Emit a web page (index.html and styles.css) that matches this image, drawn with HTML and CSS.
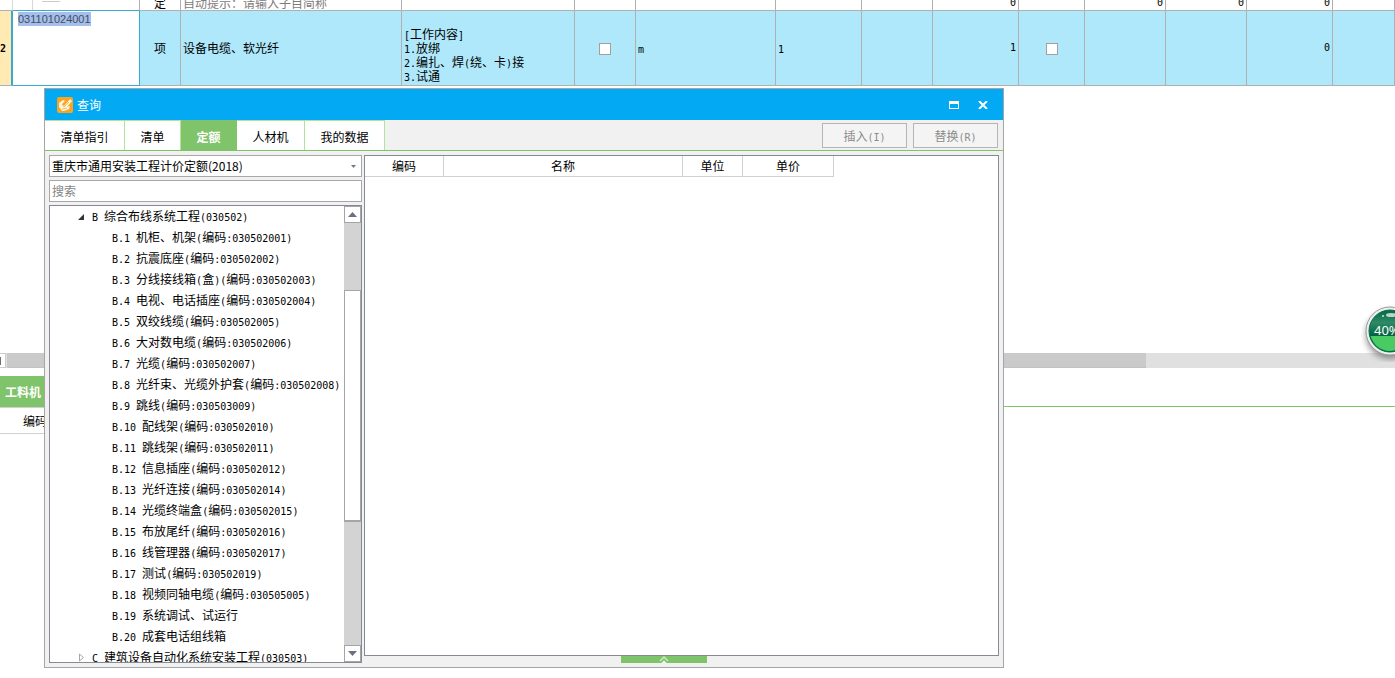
FILE: index.html
```html
<!DOCTYPE html>
<html lang="zh-CN">
<head>
<meta charset="utf-8">
<title>查询</title>
<link rel="stylesheet" href="styles.css">
</head>
<body>
<main class="workspace">
  <section class="sheet-area">
    <div class="sheet-view">
      <table class="sheet">
        <colgroup>
          <col class="w13"><col class="w127"><col class="w41"><col class="w221"><col class="w173"><col class="w61"><col class="w140"><col class="w86"><col class="w71"><col class="w86"><col class="w66"><col class="w81"><col class="w81"><col class="w86"><col>
        </colgroup>
        <tbody>
          <tr class="row-plain">
            <td class="pale"></td><td class="expander"><i></i></td><td class="center">定</td><td class="hint">自动提示：请输入子目简称</td><td></td><td></td><td></td><td></td><td></td><td class="num">0</td><td></td><td class="num">0</td><td class="num">0</td><td class="num">0</td><td></td>
          </tr>
          <tr class="row-active">
            <th class="row-no">2</th>
            <td class="editing"><input class="code-input" type="text" value="031101024001" aria-label="编码"></td>
            <td class="center">项</td>
            <td>设备电缆、软光纤</td>
            <td class="detail"><span class="n">[</span>工作内容<span class="n">]</span><br><span class="n">1.</span>放绑<br><span class="n">2.</span>编扎、焊<span class="n">(</span>绕、卡<span class="n">)</span>接<br><span class="n">3.</span>试通</td>
            <td class="center"><input class="tick" type="checkbox" aria-label="汇总"></td>
            <td><span class="n">m</span></td>
            <td><span class="n">1</span></td>
            <td></td>
            <td class="num">1</td>
            <td class="center"><input class="tick" type="checkbox" aria-label="锁定"></td>
            <td></td><td></td>
            <td class="num">0</td>
            <td></td>
          </tr>
        </tbody>
      </table>
    </div>
  </section>
  <div class="hscroll"><span class="hscroll-button"><i></i></span><span class="hscroll-thumb"></span></div>
  <div class="lower-tabs"><button class="lower-tab" type="button">工料机</button></div>
  <div class="lower-head">编码</div>
</main>

<section class="dialog" role="dialog" aria-labelledby="dialog-title">
  <header class="titlebar">
    <svg class="app-icon" width="16" height="16" viewBox="0 0 16 16">
      <rect width="16" height="16" rx="2" fill="#fba51f"/>
      <path d="M2 6l4-3 2 1-3 3 2 2 6-7 2 2-5 6 3-1-1 3-5 2H5L2 10z" fill="#fff6e2"/>
      <path d="M5 7l2 3 5-5M5 12l5-1" fill="none" stroke="#f5bb5c"/>
    </svg>
    <h1 id="dialog-title" class="title">查询</h1>
    <button class="window-button" type="button" aria-label="最大化"><svg width="10" height="8" viewBox="0 0 10 8"><path d="M0 0h10v8H0zM1 3v4h8V3z" fill="#fff" fill-rule="evenodd"/></svg></button>
    <button class="window-button" type="button" aria-label="关闭"><svg width="10" height="8" viewBox="0 0 10 8"><path d="M1 0l8 8M9 0L1 8" stroke="#fff" stroke-width="2"/></svg></button>
  </header>
  <nav class="tabs">
    <button class="tab tab-guide" type="button">清单指引</button>
    <button class="tab tab-short" type="button">清单</button>
    <button class="tab tab-short active" type="button">定额</button>
    <button class="tab tab-mid" type="button">人材机</button>
    <button class="tab tab-guide" type="button">我的数据</button>
    <div class="actions">
      <button class="action" type="button" disabled>插入<span class="n">(I)</span></button>
      <button class="action" type="button" disabled>替换<span class="n">(R)</span></button>
    </div>
  </nav>
  <div class="dialog-body">
    <div class="side">
      <div class="combo">
        <select class="combo-select" aria-label="定额库"><option>重庆市通用安装工程计价定额(2018)</option></select>
        <svg class="combo-arrow" width="5" height="3" viewBox="0 0 5 3"><path d="M0 0h5L2.500 3z" fill="#737a86"/></svg>
      </div>
      <input class="search" type="text" placeholder="搜索" aria-label="搜索">
      <div class="tree">
        <div class="tree-view">
          <div class="branch"><svg class="twist" width="7" height="7" viewBox="0 0 7 7"><path d="M6 0v6H0z" fill="#333"/></svg><span class="n">B </span>综合布线系统工程<span class="n">(030502)</span></div>
          <ul class="leaves">
            <li><span class="n">B.1 </span>机柜、机架<span class="n">(</span>编码<span class="n">:030502001)</span></li>
            <li><span class="n">B.2 </span>抗震底座<span class="n">(</span>编码<span class="n">:030502002)</span></li>
            <li><span class="n">B.3 </span>分线接线箱<span class="n">(</span>盒<span class="n">)(</span>编码<span class="n">:030502003)</span></li>
            <li><span class="n">B.4 </span>电视、电话插座<span class="n">(</span>编码<span class="n">:030502004)</span></li>
            <li><span class="n">B.5 </span>双绞线缆<span class="n">(</span>编码<span class="n">:030502005)</span></li>
            <li><span class="n">B.6 </span>大对数电缆<span class="n">(</span>编码<span class="n">:030502006)</span></li>
            <li><span class="n">B.7 </span>光缆<span class="n">(</span>编码<span class="n">:030502007)</span></li>
            <li><span class="n">B.8 </span>光纤束、光缆外护套<span class="n">(</span>编码<span class="n">:030502008)</span></li>
            <li><span class="n">B.9 </span>跳线<span class="n">(</span>编码<span class="n">:030503009)</span></li>
            <li><span class="n">B.10 </span>配线架<span class="n">(</span>编码<span class="n">:030502010)</span></li>
            <li><span class="n">B.11 </span>跳线架<span class="n">(</span>编码<span class="n">:030502011)</span></li>
            <li><span class="n">B.12 </span>信息插座<span class="n">(</span>编码<span class="n">:030502012)</span></li>
            <li><span class="n">B.13 </span>光纤连接<span class="n">(</span>编码<span class="n">:030502014)</span></li>
            <li><span class="n">B.14 </span>光缆终端盒<span class="n">(</span>编码<span class="n">:030502015)</span></li>
            <li><span class="n">B.15 </span>布放尾纤<span class="n">(</span>编码<span class="n">:030502016)</span></li>
            <li><span class="n">B.16 </span>线管理器<span class="n">(</span>编码<span class="n">:030502017)</span></li>
            <li><span class="n">B.17 </span>测试<span class="n">(</span>编码<span class="n">:030502019)</span></li>
            <li><span class="n">B.18 </span>视频同轴电缆<span class="n">(</span>编码<span class="n">:030505005)</span></li>
            <li><span class="n">B.19 </span>系统调试、试运行</li>
            <li><span class="n">B.20 </span>成套电话组线箱</li>
          </ul>
          <div class="branch"><svg class="twist" width="7" height="9" viewBox="0 0 7 9"><path d="M1.500 1v7l4-3.500z" fill="#fff" stroke="#a6a6a6"/></svg><span class="n">C </span>建筑设备自动化系统安装工程<span class="n">(030503)</span></div>
        </div>
        <div class="vscroll">
          <button class="vscroll-button" type="button" aria-label="向上"><svg width="9" height="5" viewBox="0 0 9 5"><path d="M0 5h9L4.500 0z" fill="#6b7080"/></svg></button>
          <div class="vscroll-track"><div class="vscroll-thumb"></div></div>
          <button class="vscroll-button" type="button" aria-label="向下"><svg width="9" height="5" viewBox="0 0 9 5"><path d="M0 0h9L4.500 5z" fill="#6b7080"/></svg></button>
        </div>
      </div>
    </div>
    <div class="content">
      <div class="results">
        <table class="result-table">
          <thead><tr><th class="w79">编码</th><th class="w239">名称</th><th class="w60">单位</th><th class="w91">单价</th></tr></thead>
        </table>
      </div>
      <button class="handle" type="button" aria-label="展开"><svg width="10" height="7" viewBox="0 0 10 7"><path d="M1 5l4-4 4 4" fill="none" stroke="#c9e8bf" stroke-width="1.500"/><path d="M2.500 7L5 4.500 7.500 7z" fill="#fff"/></svg></button>
    </div>
  </div>
</section>

<svg class="meter" width="60" height="60" viewBox="0 0 60 60">
  <defs>
    <linearGradient id="dark" x1="0" y1="0" x2="0" y2="1"><stop offset="0" stop-color="#006a44"/><stop offset="0.300" stop-color="#2f8a68"/><stop offset="0.600" stop-color="#006442"/></linearGradient>
    <clipPath id="level"><rect y="34" width="60" height="26"/></clipPath>
    <filter id="shade" x="-20%" y="-20%" width="140%" height="150%"><feGaussianBlur stdDeviation="3"/></filter>
  </defs>
  <circle cx="29" cy="33" r="24" fill="#666" opacity="0.700" filter="url(#shade)"/>
  <circle cx="29" cy="29" r="24" fill="#f0f0f0" stroke="#9a9a9a"/>
  <circle cx="29" cy="29" r="21" fill="url(#dark)" stroke="#00714b"/>
  <circle cx="29" cy="29" r="20" fill="#48cb62" clip-path="url(#level)"/>
  <ellipse cx="30" cy="13" rx="5" ry="2" fill="#fff" opacity="0.700"/>
  <circle cx="22" cy="14" r="1" fill="#fff" opacity="0.800"/>
  <text x="13" y="33" class="meter-text">40%</text>
</svg>
</body>
</html>
```
FILE: styles.css
```css
* { box-sizing: border-box; }
body {
  margin: 0;
  height: 100vh;
  position: relative;
  overflow: hidden;
  background: #fff;
  color: #000;
  font: 12px/14px "Noto Sans CJK SC", sans-serif;
}
button, input, select {
  margin: 0;
  padding: 0;
  border: 0;
  border-radius: 0;
  background: none;
  color: inherit;
  font: inherit;
}
.n {
  font-family: "DejaVu Sans Mono", monospace;
  font-size: 10px;
  line-height: 1;
  white-space: pre;
}

/* worksheet */
.sheet-area { height: 353px; }
.sheet-view {
  height: 86px;
  display: flex;
  align-items: flex-end;
  overflow: hidden;
}
.sheet {
  width: 100%;
  flex: none;
  table-layout: fixed;
  border-collapse: separate;
  border-spacing: 0;
}
.w13 { width: 13px; }
.w41 { width: 41px; }
.w60 { width: 60px; }
.w61 { width: 61px; }
.w66 { width: 66px; }
.w71 { width: 71px; }
.w79 { width: 79px; }
.w81 { width: 81px; }
.w86 { width: 86px; }
.w91 { width: 91px; }
.w127 { width: 127px; }
.w140 { width: 140px; }
.w173 { width: 173px; }
.w221 { width: 221px; }
.w239 { width: 239px; }
.sheet td, .sheet th {
  padding: 0 2px;
  border-right: 1px solid #b0b0b0;
  border-bottom: 1px solid #b0b0b0;
  white-space: nowrap;
}
.row-plain td { height: 16px; }
.row-plain .pale { border-right-color: #d8d8d8; }
.sheet .hint { color: #7b7b7b; overflow: hidden; }
.sheet .expander { padding: 0 0 0 19px; border-bottom-color: #39a9d2; vertical-align: top; }
.expander i {
  display: block;
  width: 28px;
  height: 15px;
  border-left: 1px solid #d8d8d8;
}
.expander i::after {
  content: "";
  display: block;
  width: 18px;
  height: 6px;
  margin-left: 9px;
  border-bottom: 1px solid #ccc;
}
.sheet .center { padding: 0; text-align: center; }
.sheet .num {
  text-align: right;
  font: 10px/14px "DejaVu Sans Mono", monospace;
}
.row-plain .num { vertical-align: bottom; }
.row-active td { height: 75px; background: #aee8fa; }
.sheet .row-no {
  padding: 0;
  background: #ffeab3;
  border-right: 2px solid #39a9d2;
  font: bold 10px "DejaVu Sans Mono", monospace;
  text-align: left;
}
.sheet .editing {
  padding: 1px 5px;
  background: #fff;
  border-color: #39a9d2;
  vertical-align: top;
}
.code-input {
  display: block;
  width: 73px;
  height: 14px;
  background: #a4bfec;
  color: #464d5e;
  font: 11px "Liberation Sans", sans-serif;
}
.sheet .detail { padding-top: 14px; }
.tick {
  appearance: none;
  width: 12px;
  height: 12px;
  border: 1px solid #a0a0a0;
  background: #fff;
  vertical-align: middle;
}

/* lower pane */
.hscroll { height: 15px; display: flex; background: #e0e0e0; }
.hscroll-button {
  width: 6px;
  display: flex;
  align-items: center;
  justify-content: flex-start;
  border: solid #ccc;
  border-width: 1px 1px 1px 0;
  background: #fff;
}
.hscroll-button i { width: 1px; height: 8px; background: #6b7080; }
.hscroll-thumb {
  flex: 0 0 1139px;
  margin-left: 1px;
  border-bottom: 1px solid #c2c2c2;
  background: #cacaca;
}
.lower-tabs {
  margin-top: 8px;
  height: 31px;
  display: flex;
  border-bottom: 1px solid #7fc36a;
}
.lower-tab {
  width: 80px;
  padding: 2px 5px 0;
  background: #7fc36a;
  color: #fff;
  font-weight: bold;
  text-align: left;
}
.lower-head {
  width: 100px;
  height: 27px;
  padding-left: 23px;
  border: solid #d0d0d0;
  border-width: 1px 0;
  line-height: 25px;
}

/* dialog */
.dialog {
  position: absolute;
  inset: 88px 391px 10px 44px;
  display: flex;
  flex-direction: column;
  border: 1px solid #a5a5a5;
  background: #f1f1f1;
}
.titlebar {
  height: 31px;
  padding: 0 10px 0 12px;
  display: flex;
  align-items: center;
  background: #03a9f2;
  color: #fff;
}
.app-icon { margin-right: 4px; }
.title { margin: 0; flex: 1; font-size: 12px; font-weight: normal; }
.window-button {
  width: 20px;
  height: 20px;
  margin-left: 9px;
  display: flex;
  align-items: center;
  justify-content: center;
}
.tabs {
  height: 31px;
  display: flex;
  border-bottom: 1px solid #7fc36a;
}
.tab {
  padding-top: 3px;
  border: solid #b2e39e;
  border-width: 1px 1px 0 0;
  background: #fff;
}
.tab-guide { width: 80px; }
.tab-short { width: 56px; }
.tab-mid { width: 68px; }
.tab.active {
  border-color: #7fc36a;
  background: #7fc36a;
  color: #fff;
  font-weight: bold;
}
.actions {
  margin-left: auto;
  padding: 3px 5px;
  display: flex;
  gap: 6px;
  align-items: flex-start;
}
.action {
  width: 85px;
  height: 25px;
  border: 1px solid #b5b5b5;
  background: #f4f4f4;
  color: #8c8c8c;
}
.dialog-body {
  flex: 1;
  min-height: 0;
  padding: 4px;
  display: flex;
  gap: 2px;
}
.side {
  width: 313px;
  display: flex;
  flex-direction: column;
  gap: 3px;
}
.combo {
  height: 22px;
  padding-right: 5px;
  display: flex;
  align-items: center;
  border: 1px solid #a8a8a8;
  background: #fff;
}
.combo-select { appearance: none; flex: 1; padding-left: 2px; outline: 0; }
.search {
  height: 22px;
  padding: 0 2px 2px;
  border: 1px solid #a8a8a8;
  background: #fff;
}
.search::placeholder { color: #858585; }
.tree {
  flex: 1;
  min-height: 0;
  display: flex;
  border: 1px solid #858a94;
  background: #fff;
}
.tree-view { flex: 1; overflow: hidden; white-space: nowrap; }
.branch, .leaves li { height: 21px; line-height: 20px; }
.branch { padding-left: 28px; }
.twist { width: 7px; margin-right: 7px; }
.leaves { margin: 0; padding: 0 0 0 62px; list-style: none; }
.vscroll {
  width: 17px;
  display: flex;
  flex-direction: column;
  background: #d3d3d3;
}
.vscroll-button {
  height: 17px;
  display: flex;
  align-items: center;
  justify-content: center;
  border: 1px solid #a5a5a5;
  background: #fff;
}
.vscroll-track { flex: 1; }
.vscroll-thumb {
  height: 55%;
  margin-top: 67px;
  border: 1px solid #a5a5a5;
  border-bottom-width: 2px;
  background: #fff;
}
.content {
  flex: 1;
  display: flex;
  flex-direction: column;
}
.results { flex: 1; border: 1px solid #858a94; background: #fff; }
.result-table {
  table-layout: fixed;
  width: 469px;
  border-spacing: 0;
}
.result-table th {
  height: 21px;
  padding: 0;
  border: solid #d0d0d0;
  border-width: 0 1px 1px 0;
  font-weight: normal;
}
.handle {
  width: 86px;
  height: 7px;
  margin-left: 257px;
  display: flex;
  justify-content: center;
  background: #7fc36a;
}

/* floating meter */
.meter { position: absolute; top: 302px; right: -26px; }
.meter-text { font: 13px "Noto Sans", sans-serif; fill: #fff; }
```
